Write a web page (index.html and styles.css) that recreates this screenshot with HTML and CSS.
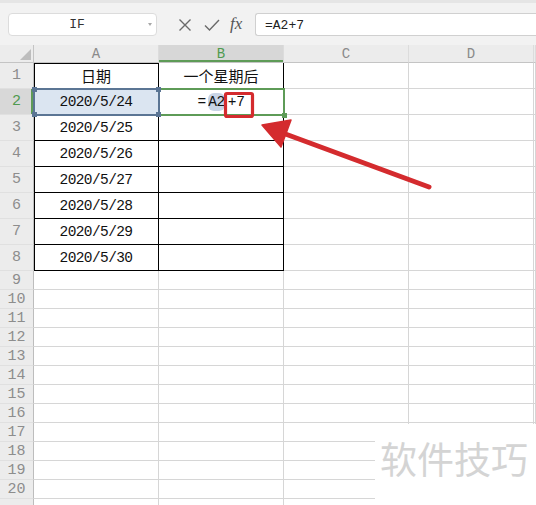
FILE: index.html
```html
<!DOCTYPE html>
<html lang="zh">
<head>
<meta charset="utf-8">
<title>WPS 表格</title>
<link rel="stylesheet" href="styles.css">
</head>
<body>
<div class="toolbar">
  <div class="namebox"><span class="nb-text">IF</span><span class="nb-arrow"></span></div>
  <svg class="ic-x" width="14" height="14" viewBox="0 0 14 14"><path d="M1.5 1.5 L12.5 12.5 M12.5 1.5 L1.5 12.5" stroke="#6a6a6a" stroke-width="1.4" fill="none"/></svg>
  <svg class="ic-ok" width="16" height="14" viewBox="0 0 16 14"><path d="M1 7.5 L5.5 12 L15 2" stroke="#6a6a6a" stroke-width="1.4" fill="none"/></svg>
  <span class="fx">fx</span>
  <div class="formula">=A2+7</div>
</div>
<div class="sheet">
  <div class="row hdr"><div class="corner"></div><div class="ch">A</div><div class="ch on">B</div><div class="ch">C</div><div class="ch">D</div><div class="ch e"></div></div>
  <div class="row big"><div class="rh">1</div><div class="c t ta top cn">日期</div><div class="c t top cn">一个星期后</div><div class="c"></div><div class="c"></div><div class="e"></div></div>
  <div class="row big"><div class="rh on">2</div><div class="c t ta d sel-a">2020/5/24<i class="h h1"></i><i class="h h2"></i><i class="h h3"></i><i class="h h4"></i></div><div class="c t sel-b"><span class="eq">=</span><span class="ref">A2</span><span class="plus">+7</span><i class="gh"></i></div><div class="c"></div><div class="c"></div><div class="e"></div></div>
  <div class="row big"><div class="rh">3</div><div class="c t ta d">2020/5/25</div><div class="c t"></div><div class="c"></div><div class="c"></div><div class="e"></div></div>
  <div class="row big"><div class="rh">4</div><div class="c t ta d">2020/5/26</div><div class="c t"></div><div class="c"></div><div class="c"></div><div class="e"></div></div>
  <div class="row big"><div class="rh">5</div><div class="c t ta d">2020/5/27</div><div class="c t"></div><div class="c"></div><div class="c"></div><div class="e"></div></div>
  <div class="row big"><div class="rh">6</div><div class="c t ta d">2020/5/28</div><div class="c t"></div><div class="c"></div><div class="c"></div><div class="e"></div></div>
  <div class="row big"><div class="rh">7</div><div class="c t ta d">2020/5/29</div><div class="c t"></div><div class="c"></div><div class="c"></div><div class="e"></div></div>
  <div class="row big"><div class="rh">8</div><div class="c t ta d">2020/5/30</div><div class="c t"></div><div class="c"></div><div class="c"></div><div class="e"></div></div>
  <div class="row sm"><div class="rh">9</div><div class="c"></div><div class="c"></div><div class="c"></div><div class="c"></div><div class="e"></div></div>
  <div class="row sm"><div class="rh">10</div><div class="c"></div><div class="c"></div><div class="c"></div><div class="c"></div><div class="e"></div></div>
  <div class="row sm"><div class="rh">11</div><div class="c"></div><div class="c"></div><div class="c"></div><div class="c"></div><div class="e"></div></div>
  <div class="row sm"><div class="rh">12</div><div class="c"></div><div class="c"></div><div class="c"></div><div class="c"></div><div class="e"></div></div>
  <div class="row sm"><div class="rh">13</div><div class="c"></div><div class="c"></div><div class="c"></div><div class="c"></div><div class="e"></div></div>
  <div class="row sm"><div class="rh">14</div><div class="c"></div><div class="c"></div><div class="c"></div><div class="c"></div><div class="e"></div></div>
  <div class="row sm"><div class="rh">15</div><div class="c"></div><div class="c"></div><div class="c"></div><div class="c"></div><div class="e"></div></div>
  <div class="row sm"><div class="rh">16</div><div class="c"></div><div class="c"></div><div class="c"></div><div class="c"></div><div class="e"></div></div>
  <div class="row sm"><div class="rh">17</div><div class="c"></div><div class="c"></div><div class="c"></div><div class="c"></div><div class="e"></div></div>
  <div class="row sm"><div class="rh">18</div><div class="c"></div><div class="c"></div><div class="c"></div><div class="c"></div><div class="e"></div></div>
  <div class="row sm"><div class="rh">19</div><div class="c"></div><div class="c"></div><div class="c"></div><div class="c"></div><div class="e"></div></div>
  <div class="row sm"><div class="rh">20</div><div class="c"></div><div class="c"></div><div class="c"></div><div class="c"></div><div class="e"></div></div>
  <div class="row sm"><div class="rh"></div><div class="c"></div><div class="c"></div><div class="c"></div><div class="c"></div><div class="e"></div></div>
</div>
<svg class="annot" width="536" height="505" viewBox="0 0 536 505">
  <rect x="225.5" y="93.5" width="27" height="23" rx="1.5" fill="none" stroke="#d42b2e" stroke-width="3.2"/>
  <line x1="429" y1="187" x2="280" y2="132" stroke="#d42b2e" stroke-width="5" stroke-linecap="round"/>
  <polygon points="262,125 291,120 281,147" fill="#d42b2e" stroke="#d42b2e" stroke-width="1.5" stroke-linejoin="round"/>
</svg>
<div class="watermark">软件技巧</div>
</body>
</html>
```
FILE: styles.css
```css
html, body {
  margin: 0;
  padding: 0;
}
body {
  width: 536px;
  height: 505px;
  overflow: hidden;
  position: relative;
  background: #ffffff;
  font-family: "Liberation Mono", "Noto Sans CJK SC", monospace;
}

/* ---------- toolbar ---------- */
.toolbar {
  height: 45px;
  box-sizing: border-box;
  background: #f2f2f2;
  border-top: 3px solid #e5e5e5;
  display: flex;
  align-items: flex-start;
  padding: 10px 0 0 8px;
}
.namebox {
  width: 149px;
  height: 23px;
  box-sizing: border-box;
  background: #fff;
  border: 1px solid #dcdcdc;
  border-radius: 4px;
  position: relative;
  display: flex;
  align-items: center;
}
.nb-text {
  width: 136px;
  text-align: center;
  font: 13px "Liberation Mono", monospace;
  color: #333;
}
.nb-arrow {
  position: absolute;
  right: 4px;
  top: 9px;
  width: 0;
  height: 0;
  border-left: 2px solid transparent;
  border-right: 2px solid transparent;
  border-top: 3px solid #a8a8a8;
}
.ic-x {
  margin: 5px 0 0 21px;
}
.ic-ok {
  margin: 5px 0 0 12px;
}
.fx {
  margin: 1px 0 0 10px;
  font: italic 17px "Liberation Serif", serif;
  color: #555;
  width: 18px;
}
.formula {
  margin-left: 7px;
  flex: 1;
  height: 23px;
  box-sizing: border-box;
  background: #fff;
  border: 1px solid #d0d0d0;
  border-right: none;
  border-radius: 3px 0 0 3px;
  padding: 4px 0 0 9px;
  font: 13px "Liberation Mono", monospace;
  color: #222;
}

/* ---------- sheet ---------- */
.row {
  display: flex;
}
.row > div {
  box-sizing: border-box;
  flex: none;
  border-right: 1px solid #d6d6d6;
  border-bottom: 1px solid #d6d6d6;
}
.hdr { height: 18px; }
.big { height: 26px; }
.sm { height: 19px; }

.corner {
  width: 34px;
  background: #ececec;
  border-right-color: #c4c4c4 !important;
  border-bottom-color: #c4c4c4 !important;
  position: relative;
}
.corner::after {
  content: "";
  position: absolute;
  right: 2px;
  bottom: 2px;
  width: 0;
  height: 0;
  border-left: 11px solid transparent;
  border-bottom: 11px solid #bdbdbd;
}
.ch {
  width: 125px;
  background: #ececec;
  border-bottom-color: #c4c4c4 !important;
  border-right-color: #dcdcdc !important;
  color: #8a8a8a;
  font: 14px "Liberation Mono", monospace;
  display: flex;
  align-items: center;
  justify-content: center;
}
.ch.on {
  background: #d7d7d7;
  color: #4f9a4f;
  box-shadow: inset 0 -2px 0 #5e9b57;
}
.row > .e {
  flex: 1;
}
.rh {
  width: 34px;
  background: #ececec;
  border-right-color: #bdbdbd !important;
  border-bottom-color: #e0e0e0 !important;
  color: #8d8d8d;
  font: 15px "Liberation Mono", monospace;
  display: flex;
  align-items: center;
  justify-content: center;
}
.rh.on {
  background: #d8d8d8;
  color: #4f9a4f;
  box-shadow: inset -2px 0 0 #5e9b57;
}
.c {
  width: 125px;
  display: flex;
  align-items: center;
  justify-content: center;
  color: #111;
}
.row > .t {
  border-right-color: #000;
  border-bottom-color: #000;
}
.ta {
  box-shadow: inset 1px 0 0 #000;
}
.ta.top {
  box-shadow: inset 1px 1px 0 #000;
}
.cn {
  font: 15px "Noto Sans CJK SC", sans-serif;
}
.d {
  font: 14.5px "Liberation Mono", monospace;
  letter-spacing: -0.6px;
}

/* selection of A2 */
.sel-a {
  position: relative;
  background: #dbe5f1;
}
.sel-a::after {
  content: "";
  position: absolute;
  top: -1px;
  left: -1px;
  right: -2px;
  bottom: -2px;
  border: 2px solid #5b7594;
  z-index: 2;
}
.h {
  position: absolute;
  width: 5px;
  height: 5px;
  background: #5b7594;
  z-index: 3;
}
.h1 { left: -2px; top: -2px; }
.h2 { right: -3px; top: -2px; }
.h3 { left: -2px; bottom: -3px; }
.h4 { right: -3px; bottom: -3px; }

/* editing B2 */
.sel-b {
  position: relative;
  font: 14.5px "Liberation Mono", monospace;
  color: #111;
}
.sel-b::after {
  content: "";
  position: absolute;
  top: -1px;
  left: -1px;
  right: -2px;
  bottom: -2px;
  border: 2px solid #5e9b57;
  z-index: 1;
}
.eq {
  margin-right: 2px;
}
.ref {
  background: #c8d4e6;
  border-radius: 6px;
  padding: 1px 0;
  letter-spacing: -0.4px;
}
.plus {
  margin-left: 3px;
  letter-spacing: -0.4px;
}
.gh {
  position: absolute;
  right: -4px;
  bottom: -4px;
  width: 5px;
  height: 5px;
  background: #5e9b57;
  z-index: 2;
}

/* ---------- overlays ---------- */
.annot {
  position: absolute;
  left: 0;
  top: 0;
  z-index: 5;
  pointer-events: none;
}
.watermark {
  position: absolute;
  left: 375px;
  top: 424px;
  width: 161px;
  height: 81px;
  box-sizing: border-box;
  background: #fff;
  padding: 14px 0 0 5px;
  font: 37px/40px "Noto Sans CJK SC", sans-serif;
  color: #d4d4d4;
  white-space: nowrap;
  z-index: 4;
}
```
